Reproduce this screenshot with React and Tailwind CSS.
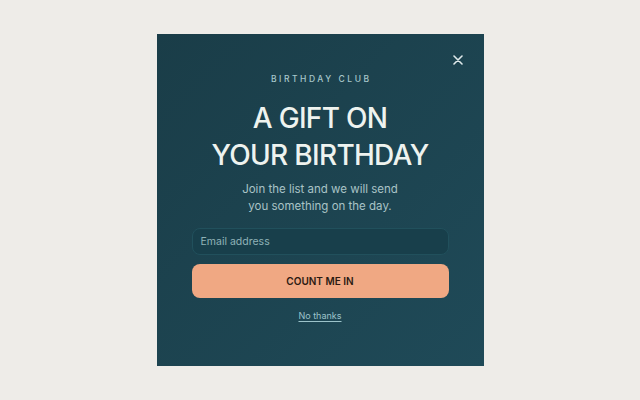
import React from "react";

const App = () => {
  return (
    <main
      className="w-[640px] h-[400px] bg-[#eeece8] flex items-center justify-center"
      style={{ fontFamily: "Inter, 'Liberation Sans', sans-serif" }}
    >
      {/* Popup card */}
      <div className="relative w-[327px] h-[332px] bg-gradient-to-br from-[#1a3d48] to-[#1f4a58] px-[35px] pt-[40px] flex flex-col items-center">
        <button className="absolute right-[18px] top-[18px] w-[16px] h-[16px] flex items-center justify-center text-[#dfe9ea]">
          <svg width="10" height="10" viewBox="0 0 10 10" fill="none">
            <path d="M1 1L9 9M9 1L1 9" stroke="currentColor" strokeWidth="1.6" strokeLinecap="round" />
          </svg>
        </button>

        <p className="text-[8.5px] font-medium tracking-[0.3em] text-[#a7c7cb] leading-[10px] pl-[0.3em]">
          BIRTHDAY CLUB
        </p>

        <h1 className="mt-[16px] text-center text-[28px] leading-[37px] font-medium tracking-[-0.025em] text-[#eef3ef]">
          A GIFT ON
          <br />
          YOUR BIRTHDAY
        </h1>

        <p className="mt-[7px] text-center text-[11.5px] leading-[17px] text-[#a9c3c6]">
          Join the list and we will send
          <br />
          you something on the day.
        </p>

        <div className="mt-[13px] w-full h-[27px] rounded-[8px] bg-[#183f4b] border border-[#21505c] flex items-center px-[8px]">
          <span className="text-[10.5px] text-[#8fb2b7]">Email address</span>
        </div>

        <button className="mt-[9px] w-full h-[34px] rounded-[8px] bg-[#f0a883] text-[10px] font-semibold text-[#2b1a12]">
          COUNT ME IN
        </button>

        <a className="mt-[11px] text-[9px] text-[#9cc3ca] underline underline-offset-2">
          No thanks
        </a>
      </div>
    </main>
  );
};

export default App;
